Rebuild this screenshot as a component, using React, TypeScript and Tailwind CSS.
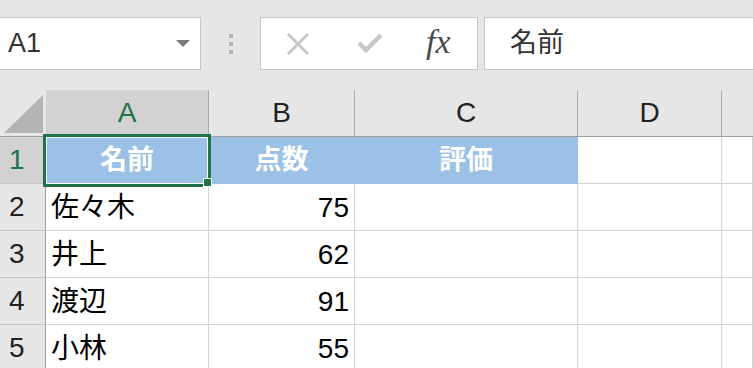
const font = { fontFamily: '"Liberation Sans", "Noto Sans CJK JP", sans-serif' };

const rows = [
  { n: '2', name: '佐々木', score: '75' },
  { n: '3', name: '井上', score: '62' },
  { n: '4', name: '渡辺', score: '91' },
  { n: '5', name: '小林', score: '55' },
];

function FormulaBar() {
  return (
    <div className="flex h-[90px] items-start pt-[17px]">
      {/* name box */}
      <div className="-ml-px flex h-[53px] w-[202px] shrink-0 items-center justify-between border border-[#c6c6c6] bg-white pl-[8px] pr-[10px]">
        <span className="text-[27px] leading-none text-[#333]">A1</span>
        <svg width="14" height="7" viewBox="0 0 14 7">
          <path d="M0 0 H14 L7 7 Z" fill="#7a7a7a" />
        </svg>
      </div>
      <div className="flex h-[53px] w-[59px] shrink-0 flex-col items-center justify-center gap-[4px]">
        <div className="h-[4px] w-[4px] bg-[#b4b4b4]" />
        <div className="h-[4px] w-[4px] bg-[#b4b4b4]" />
        <div className="h-[4px] w-[4px] bg-[#b4b4b4]" />
      </div>
      {/* cancel / enter / fx */}
      <div className="flex h-[53px] w-[218px] shrink-0 items-center border border-[#c6c6c6] bg-white pl-[25px]">
        <svg width="24" height="22" viewBox="0 0 24 22">
          <path d="M2 1 L22 21 M22 1 L2 21" stroke="#c8c8c8" strokeWidth="3" />
        </svg>
        <svg className="ml-[47px]" width="26" height="21" viewBox="0 0 26 21">
          <path d="M2 10 L9 17 L24 2" stroke="#c8c8c8" strokeWidth="4.5" fill="none" />
        </svg>
        <span
          className="ml-[43px] -mt-[3px] text-[34px] italic leading-none text-[#4a4a4a]"
          style={{ fontFamily: '"Liberation Serif", serif' }}
        >
          fx
        </span>
      </div>
      <div className="ml-[6px] flex h-[53px] w-[300px] shrink-0 items-center border border-[#c6c6c6] bg-white pl-[25px]">
        <span className="text-[27px] leading-none text-[#333]">名前</span>
      </div>
    </div>
  );
}

function Sheet() {
  const head = 'flex h-[47px] items-center justify-center border-r border-b border-r-[#ababab] border-b-[#9e9e9e] text-[28px] text-[#222]';
  const rowHead = 'flex h-[47px] items-center border-r border-b border-r-[#9e9e9e] border-b-[#c4c4c4] pl-[9px] text-[28px] text-[#222]';
  const cell = 'flex h-[47px] items-center border-r border-b border-[#d4d4d4] bg-white text-[28px] text-black';
  const blue = 'flex h-[47px] items-center justify-center border-r border-b border-[#9bc2e6] bg-[#9bc2e6] text-[27px] font-bold text-white';

  return (
    <div className="grid grid-cols-[46px_163px_146px_223px_144px_1fr]">
      {/* header row */}
      <div className="flex h-[47px] items-end justify-end border-b border-b-[#9e9e9e] pb-[3px] pr-[3px]">
        <svg width="39" height="38" viewBox="0 0 39 38">
          <path d="M39 0 V38 H0 Z" fill="#b4b4b4" />
        </svg>
      </div>
      <div className={`${head} bg-[#d2d2d2] !text-[#217346]`}>A</div>
      <div className={head}>B</div>
      <div className={head}>C</div>
      <div className={head}>D</div>
      <div className="h-[47px] border-b border-b-[#9e9e9e]" />

      {/* row 1 */}
      <div className={`${rowHead} bg-[#d2d2d2] !text-[#217346]`}>1</div>
      <div className={blue}>名前</div>
      <div className={blue}>点数</div>
      <div className={blue}>評価</div>
      <div className={cell} />
      <div className={cell} />

      {rows.map((r) => (
        <div key={r.n} className="contents">
          <div className={rowHead}>{r.n}</div>
          <div className={`${cell} pl-[5px] pt-[2px]`}>{r.name}</div>
          <div className={`${cell} justify-end pr-[5px] pt-[2px]`}>{r.score}</div>
          <div className={cell} />
          <div className={cell} />
          <div className={cell} />
        </div>
      ))}
    </div>
  );
}

export default function App() {
  return (
    <div className="relative h-[368px] w-[753px] overflow-hidden bg-[#e6e6e6]" style={font}>
      <FormulaBar />
      <Sheet />
      {/* active cell A1 */}
      <div className="absolute left-[43px] top-[134px] h-[53px] w-[168px] border-[3px] border-[#217346]">
        <div className="h-full w-full border border-white" />
      </div>
      <div className="absolute left-[203px] top-[178px] h-[9px] w-[9px] border border-white bg-[#217346]" />
    </div>
  );
}
